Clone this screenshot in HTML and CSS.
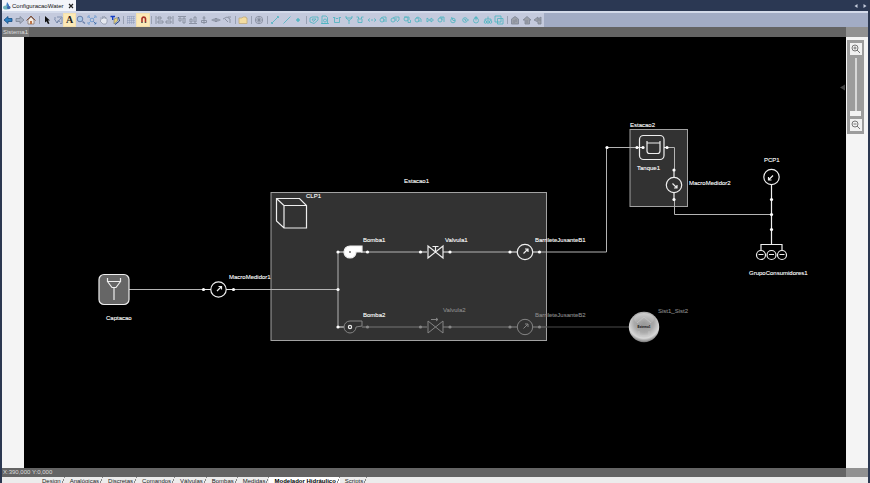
FILE: index.html
```
<!DOCTYPE html>
<html lang="pt-BR">
<head>
<meta charset="utf-8">
<title>ConfiguracaoWater</title>
<link rel="stylesheet" href="styles.css">
</head>
<body>
<div class="window">
  <header class="titlebar">
    <div class="doc-tab">
      <svg class="doc-icon" viewBox="0 0 8 8" aria-hidden="true"><path d="M4 0L6 3V5H3Z" fill="#3b78c4"/><ellipse cx="3" cy="5.5" rx="3" ry="2" fill="#6fb5bd"/><circle cx="5.7" cy="5.5" r="1.8" fill="#3c68ad"/></svg>
      <span>ConfiguracaoWater</span>
      <button class="doc-close" aria-label="Fechar"><svg viewBox="0 0 6 6"><path d="M1 1L5 5M5 1L1 5" stroke="#222" stroke-width="1.2"/></svg></button>
    </div>
    <div class="doc-nav">
      <button aria-label="Anterior"><svg viewBox="0 0 6 6"><path d="M4.500 1V5L1.500 3Z" fill="#c5ccdc"/></svg></button>
      <button aria-label="Próximo"><svg viewBox="0 0 6 6"><path d="M1.500 1V5L4.500 3Z" fill="#c5ccdc"/></svg></button>
    </div>
  </header>

  <div class="toolbar-row">
  <div class="toolbar" role="toolbar" aria-label="Ferramentas">
    <div class="group three">
      <button aria-label="Voltar"><svg viewBox="0 0 12 12"><path d="M2 6L6 2.500V4.500H10V7.500H6V9.500Z" fill="#2d7fc0" stroke="#174d83" stroke-width=".8"/></svg></button>
      <button aria-label="Avançar"><svg viewBox="0 0 12 12"><path d="M10 6L6 2.500V4.500H2V7.500H6V9.500Z" fill="#a9b2c5" stroke="#7c8596" stroke-width=".8"/></svg></button>
      <button aria-label="Início"><svg viewBox="0 0 12 12"><path d="M3 6V10H9V6L6 3Z" fill="#f4ede4" stroke="#8a7469" stroke-width=".8"/><path d="M1.500 6.500L6 2L10.500 6.500" fill="none" stroke="#80513e"/><path d="M5 7H7V10H5Z" fill="#bf7448"/></svg></button>
    </div><i class="sep"></i>
    <div class="group seven">
      <button aria-label="Selecionar"><svg viewBox="0 0 12 12"><path d="M4 2L9 6.500H7L8.500 9.500L7 10L5.500 7.300L4 8.500Z" fill="#111"/></svg></button>
      <button aria-label="Editar pontos"><svg viewBox="0 0 12 12" fill="none" stroke="#6f81a3" stroke-width=".8"><path d="M2 4H4M5 3H10V9.500H8"/><path d="M2.500 5L5 9L6 6.500L8.500 8M5 9L9 4"/></svg></button>
      <button class="on letter" aria-label="Texto">A</button>
      <button aria-label="Zoom"><svg viewBox="0 0 12 12" fill="#a9c7e6" stroke="#6a80aa"><circle cx="5" cy="5" r="2.800"/><path d="M7.500 7.500L10 9.500" stroke-width="1.400"/></svg></button>
      <button aria-label="Ajustar"><svg viewBox="0 0 12 12" fill="none" stroke="#6f9bd0" stroke-width=".9"><path d="M2 4V2H4M8 2H10V4M2 8V10H4M8 10H10V8M3 3L4.500 4.500M9 3L7.500 4.500M3 9L4.500 7.500"/><circle cx="6" cy="6" r="1.800"/><path d="M7.500 7.500L10 10" stroke="#4468a0"/></svg></button>
      <button aria-label="Mover"><svg viewBox="0 0 12 12"><path d="M3 6V3.500L4.500 5V2.500L6 4.500V2L7.500 4.500V3L9 5.500V8L8 10H5L2 7Z" fill="#e6e9f0" stroke="#8b94a6" stroke-width=".7"/></svg></button>
      <button aria-label="Formatar"><svg viewBox="0 0 12 12"><path d="M1.500 2.500H6M3.700 2.500V6" stroke="#153fc4" stroke-width="1.4"/><path d="M5 5L8.500 3.500L8.500 7L5 10Z" fill="#e4d27a" stroke="#777" stroke-width=".6"/><path d="M9.500 3L10.500 7L6 10.500" fill="none" stroke="#27488b"/></svg></button>
    </div><i class="sep"></i>
    <div class="group two">
      <button aria-label="Grade"><svg viewBox="0 0 12 12"><path d="M2.500 2V10M4.500 2V10M6.500 2V10M8.500 2V10M2 2.500H10M2 4.500H10M2 6.500H10M2 8.500H10" stroke="#8d9ab8" stroke-width=".5"/></svg></button>
      <button class="on" aria-label="Magnetismo"><svg viewBox="0 0 12 12" fill="none"><path d="M5 8V4.500A1.800 1.800 0 0 1 8.500 4.500V8" stroke="#a93228" stroke-width="1.600"/><path d="M4.200 8.500H5.800M7.700 8.500H9.300" stroke="#555"/></svg></button>
    </div><i class="sep"></i>
    <div class="group seven gray">
      <button aria-label="Alinhar à esquerda"><svg viewBox="0 0 12 12"><path d="M3 2V10M5 3H8V5H5ZM5 7H10V9H5Z"/></svg></button>
      <button aria-label="Alinhar à direita"><svg viewBox="0 0 12 12"><path d="M9 2V10M4 3H7V5H4ZM2 7H7V9H2Z"/></svg></button>
      <button aria-label="Alinhar ao topo"><svg viewBox="0 0 12 12"><path d="M2 2.500H10M3 4H5V7H3ZM7 4H9V9H7Z"/></svg></button>
      <button aria-label="Alinhar à base"><svg viewBox="0 0 12 12"><path d="M2 9.500H10M3 5H5V8H3ZM7 3H9V8H7Z"/></svg></button>
      <button aria-label="Centralizar vertical"><svg viewBox="0 0 12 12"><path d="M6 2V10M4.500 4H7.500M3.500 6.500H8.500V8.500H3.500Z"/></svg></button>
      <button aria-label="Centralizar horizontal"><svg viewBox="0 0 12 12"><path d="M1.500 6H10.500M4 4.500L2.500 6L4 7.500M8 4.500L9.500 6L8 7.500M5 4.500H7V7.500H5Z"/></svg></button>
      <button aria-label="Girar"><svg viewBox="0 0 12 12"><path d="M2 5L6 3L9 5V9M4 5L7 8M7 3H10"/></svg></button>
    </div><i class="sep"></i>
    <div class="group one">
      <button aria-label="Abrir"><svg viewBox="0 0 12 12"><path d="M2 4H5L6 3H9V4H10V9.500H2Z" fill="#f3dca0" stroke="#c2ab7c" stroke-width=".8"/></svg></button>
    </div><i class="sep"></i>
    <div class="group one gray">
      <button aria-label="Global"><svg viewBox="0 0 12 12"><circle cx="6" cy="6" r="3.700"/><path d="M6 3V9M4.500 4L7.500 8M7.500 4L4.500 8M3 6H9"/></svg></button>
    </div><i class="sep"></i>
    <div class="group three teal">
      <button aria-label="Conexão"><svg viewBox="0 0 12 12"><path d="M3 9L9 3M2.500 8V9.500H4M8 2.500H9.500V4"/></svg></button>
      <button aria-label="Linha"><svg viewBox="0 0 12 12"><path d="M2.500 9.500L9.500 2.500"/></svg></button>
      <button aria-label="Nó"><svg viewBox="0 0 12 12"><path d="M6 4V8M4 6H8M5 5H7V7H5Z"/></svg></button>
    </div><i class="sep"></i>
    <div class="group wide teal">
      <button aria-label="Etiqueta"><svg viewBox="0 0 12 12"><path d="M2 4L4 3H10V6L6 9.500L2 8ZM4 5H8L5.500 7.500Z"/></svg></button>
      <button aria-label="Estação"><svg viewBox="0 0 12 12"><path d="M3 2H7L8.500 3.500V9.500H3ZM2 9.500H10"/><circle cx="6" cy="6.500" r="1.500"/></svg></button>
      <button aria-label="Tanque"><svg viewBox="0 0 12 12"><path d="M2 3.500H4L5 4.500H7L8 3.500H10M3.500 4V8.500H8.500V4"/></svg></button>
      <button aria-label="Captação"><svg viewBox="0 0 12 12"><path d="M3 2V4H9V2M3 4L6 6.500L9 4M6 6V10"/></svg></button>
      <button aria-label="Reservatório"><svg viewBox="0 0 12 12"><path d="M2.500 3H4.500V5H7.500V3H9.500M4 5V8.500H8V5"/></svg></button>
      <button aria-label="Trecho"><svg viewBox="0 0 12 12"><path d="M4 4.500L2 6L4 7.500M8 4.500L10 6L8 7.500M5 6H7"/></svg></button>
      <button aria-label="Bomba"><svg viewBox="0 0 12 12"><circle cx="5" cy="6" r="2"/><path d="M4 4L6 3H9V8M7 5V8"/></svg></button>
      <button aria-label="Bomba dupla"><svg viewBox="0 0 12 12"><circle cx="4" cy="6" r="2"/><path d="M4 4L6 3H10V6L8 8M7 4V7"/></svg></button>
      <button aria-label="Booster"><svg viewBox="0 0 12 12"><circle cx="5" cy="5" r="2"/><path d="M3 3H8V6M7 6V8.500H9.500V6"/></svg></button>
      <button aria-label="Válvula"><svg viewBox="0 0 12 12"><circle cx="5" cy="6" r="2"/><path d="M4 4L6 3L9 5V8M7 6V8"/></svg></button>
      <button aria-label="Retenção"><svg viewBox="0 0 12 12"><path d="M3 4L5.500 6L3 8ZM5 6H7M7 4L9.500 6L7 8Z"/></svg></button>
      <button aria-label="Controle"><svg viewBox="0 0 12 12"><circle cx="5" cy="6" r="2"/><path d="M5 4V3H9V8M7 3V6"/></svg></button>
      <button aria-label="Medidor de pressão"><svg viewBox="0 0 12 12"><circle cx="6" cy="6.500" r="2.300"/><path d="M4.500 3L6 6.500H8"/></svg></button>
      <button aria-label="Medidor de vazão"><svg viewBox="0 0 12 12"><circle cx="6" cy="6" r="2.300"/><path d="M5 5L7 6L6 7M8.500 6H10"/></svg></button>
      <button aria-label="Ponto crítico"><svg viewBox="0 0 12 12"><circle cx="6" cy="6.500" r="2.500"/><path d="M6 2V6.500M4.500 3.500H7.500"/></svg></button>
      <button aria-label="Consumidores"><svg viewBox="0 0 12 12"><path d="M6 2.500V5M3 7V5H9V7"/><circle cx="3.500" cy="8" r="1.300"/><circle cx="6" cy="8" r="1.300"/><circle cx="8.500" cy="8" r="1.300"/></svg></button>
      <button aria-label="Copiar"><svg viewBox="0 0 12 12"><path d="M2 2H8V8H2ZM4.500 4.500H10V10H4.500Z"/></svg></button>
    </div><i class="sep"></i>
    <div class="group three gray solid">
      <button aria-label="Validar"><svg viewBox="0 0 12 12"><path d="M2.500 10V5L6 2.500L9.500 5V10ZM5 6V9M7 5V8"/></svg></button>
      <button aria-label="Subir"><svg viewBox="0 0 12 12"><path d="M2 6L6 2.500L10 6H8.500V10H4V6ZM6 6V9"/></svg></button>
      <button aria-label="Descarregar"><svg viewBox="0 0 12 12"><path d="M2 6L6 3V5L9 3V10H6V8ZM5 6H9"/></svg></button>
    </div>
  </div>
  </div>

  <div class="strip"><span class="sys-name">Sistema1</span><span class="strip-end"></span></div>

  <main class="workspace">
    <div class="margin"></div>
    <div class="canvas">
      <svg class="diagram" viewBox="24 37 822 431" role="img" aria-label="Modelador hidráulico">
        <defs>
          <radialGradient id="ball" cx=".5" cy=".35" r=".65"><stop offset="0" stop-color="#929292"/><stop offset=".5" stop-color="#aaa"/><stop offset=".8" stop-color="#d8d8d8"/><stop offset="1" stop-color="#777"/></radialGradient>
          <linearGradient id="shine" x2="0" y2="1"><stop offset="0" stop-color="#fff"/><stop offset="1" stop-color="#fff" stop-opacity="0"/></linearGradient>
          <g id="valve"><path d="M-7.500-6V6L7.500-6V6Z"/></g>
          <g id="meter"><circle r="7.700"/><path d="M-1.500 1.500L3-3M0-3H3V0"/></g>
          <circle id="dot" r="1.600"/>
        </defs>
        <rect class="station" x="271" y="192.500" width="275.500" height="148"/>
        <rect class="station" x="630" y="129.500" width="57.500" height="77"/>

        <g class="pipe">
          <path d="M129 289.500H203M233 289.500H338M338 252V327M368 252H420M450 252H510M540 252H606.500V147.500H637M667 147.500H674.500V170M674.500 200V214.500H771.500"/>
          <path class="off" d="M368 327H420M450 327H510M540 327H546"/>
          <path class="far" d="M546 327H630"/>
        </g>

        <g class="shape">
          <path d="M203 289.500H211M226 289.500H233M338 252H344M361 252H368M420 252H427M443 252H450M510 252H517M533 252H540M338 327H344M637 147.500H643M664 147.500H667M674 170V177M674 193V200M771.500 185V244.500M761 250V244.500H782V250"/>
          <rect x="99" y="274.500" width="30" height="30" rx="5" fill="#666"/>
          <path d="M107.500 278V281.500H120.500V278M107.500 281.500L112 287.500H116L120.500 281.500M114 287.500V300"/>
          <path d="M276.500 198.500H299.500L306.500 205.500V228H284L276.500 221ZM276.500 198.500L284 205.500V228M284 205.500H306.500"/>
          <path d="M362 246H350A6 6 0 1 0 356 252H362Z" fill="#fff"/><circle cx="350" cy="252" r=".8" fill="#000" stroke="none"/>
          <g class="faded"><path d="M368 327H362M362 321H350A6 6 0 1 0 356 327L362 326ZM420 327H427M443 327H450M510 327H517M533 327H540M431 319.500H438M436 318L438 319.500L436 321"/><use href="#valve" x="435.500" y="327"/><use href="#meter" x="525" y="327"/></g>
          <circle cx="350" cy="327" r="1.600"/>
          <use href="#valve" x="435.500" y="252"/><path d="M432.500 246.500H438.500M435.500 246.500V252"/>
          <use href="#meter" x="218.500" y="289.500"/>
          <use href="#meter" x="525" y="252"/>
          <g transform="translate(674 185) rotate(90)"><use href="#meter"/></g>
          <g transform="translate(771.500 177) rotate(180)"><use href="#meter"/></g>
          <rect x="639.500" y="135.500" width="24.500" height="24" rx="4"/>
          <path d="M647 141V151Q647 153.500 649.500 153.500H657.500Q660 153.500 660 151V141M647 143H660"/>
          <circle cx="761" cy="255" r="4.500"/><circle cx="771.500" cy="255" r="4.500"/><circle cx="782" cy="255" r="4.500"/>
          <path d="M758.500 254.500H763.500M769 254.500H774M779.500 254.500H784.500"/>
        </g>

        <g class="dots">
          <use href="#dot" x="203.500" y="289.500"/><use href="#dot" x="233.500" y="289.500"/><use href="#dot" x="338" y="289.500"/>
          <use href="#dot" x="338" y="252"/><use href="#dot" x="367.500" y="252"/><use href="#dot" x="420.500" y="252"/><use href="#dot" x="450" y="252"/><use href="#dot" x="510" y="252"/><use href="#dot" x="539.500" y="252"/>
          <use href="#dot" x="338" y="327"/>
          <use href="#dot" x="607" y="147.500"/><use href="#dot" x="637" y="147.500"/><use href="#dot" x="643" y="147.500"/><use href="#dot" x="667" y="147.500"/>
          <use href="#dot" x="674" y="170"/><use href="#dot" x="674" y="199.500"/>
          <use href="#dot" x="771.500" y="199.500"/><use href="#dot" x="771.500" y="214.500"/><use href="#dot" x="771.500" y="229.500"/>
        </g>
        <g class="dots-off">
          <use href="#dot" x="367.500" y="327"/><use href="#dot" x="420.500" y="327"/><use href="#dot" x="450" y="327"/><use href="#dot" x="510" y="327"/><use href="#dot" x="539.500" y="327"/>
        </g>

        <circle cx="644" cy="327" r="15.200" fill="url(#ball)"/>
        <ellipse cx="644" cy="319" rx="10" ry="6" fill="url(#shine)" opacity=".45"/>
        <path d="M637 323L644 317L651 323M639 331V336H649V331" fill="none" stroke="#ccc" opacity=".6"/>
        <path d="M845 84.500L840 87.500L845 90.500Z" fill="#444"/>

        <g class="label">
          <text x="404" y="183">Estacao1</text><text x="306" y="198">CLP1</text>
          <text x="363" y="242">Bomba1</text><text x="445" y="242">Valvula1</text><text x="535" y="242">BarrileteJusanteB1</text>
          <text x="363" y="317">Bomba2</text>
          <text x="229" y="279">MacroMedidor1</text><text x="106" y="320">Captacao</text>
          <text x="630" y="127">Estacao2</text><text x="637" y="170">Tanque1</text><text x="689" y="185">MacroMedidor2</text>
          <text x="764" y="162">PCP1</text><text x="749" y="275">GrupoConsumidores1</text>
        </g>
        <g class="label off-label">
          <text x="443" y="312">Valvula2</text><text x="535" y="317">BarrileteJusanteB2</text><text x="658" y="313">Sist1_Sist2</text>
        </g>
        <text class="ball-label" x="644" y="328">Externo1</text>
      </svg>
    </div>
    <aside class="side">
      <div class="zoom">
        <button class="zoom-btn" aria-label="Aumentar zoom"><svg viewBox="0 0 12 12"><circle cx="5" cy="5" r="3"/><path d="M7 7L10 10M3.500 5H6.500M5 3.500V6.500"/></svg></button>
        <input class="zoom-range" type="range" min="0" max="100" value="0" aria-label="Nível de zoom">
        <button class="zoom-btn" aria-label="Reduzir zoom"><svg viewBox="0 0 12 12"><circle cx="5" cy="5" r="3"/><path d="M7 7L10 10M3.500 5H6.500"/></svg></button>
      </div>
    </aside>
  </main>

  <div class="strip status"><span>X:390,000 Y:0,000</span><span class="strip-end"></span></div>

  <nav class="sheets">
    <a href="#">Design</a><a href="#">Analógicas</a><a href="#">Discretas</a><a href="#">Comandos</a><a href="#">Válvulas</a><a href="#">Bombas</a><a href="#">Medidas</a><a class="current" href="#" aria-current="page">Modelador Hidráulico</a><a href="#">Scripts</a>
  </nav>
</div>
</body>
</html>
```
FILE: styles.css
```
* { box-sizing: border-box; }

body {
  margin: 0;
  background: #2b3750;
  font: 6px/8px "Liberation Sans", sans-serif;
  color: #111;
}

button {
  display: flex;
  align-items: center;
  justify-content: center;
  padding: 0;
  border: 0;
  background: none;
}

.window {
  display: flex;
  flex-direction: column;
  height: 100vh;
  padding: 0 2px;
  overflow: hidden;
}

.titlebar {
  display: flex;
  justify-content: space-between;
  height: 11px;
  flex: none;
  background: #2b3853;
}

.doc-tab {
  display: flex;
  align-items: center;
  gap: 1px;
  padding: 0 1px;
  background: #f3f5fa;
}

.doc-icon { width: 8px; height: 8px; }
.doc-close { width: 8px; margin-left: 3px; }
.doc-close svg { width: 6px; height: 6px; }
.doc-nav { display: flex; gap: 3px; }
.doc-nav svg { width: 6px; height: 6px; }

.toolbar-row {
  flex: none;
  height: 16px;
  border-top: 2px solid #d3daea;
  background: #a2acc5;
}

.toolbar {
  display: flex;
  align-items: center;
  width: max-content;
  height: 14px;
  background: #c4cadd;
}

.group { display: flex; }
.group button { flex: 1; min-width: 0; height: 12px; }
.group svg { flex: none; width: 12px; height: 12px; }
.one { width: 12px; }
.two { width: 24px; }
.three { width: 35px; }
.seven { width: 80px; }
.wide { width: 197px; }
.group .on { background: #fce9b6; box-shadow: 0 0 0 1px #f3e0ae; }
.letter { font: bold 10px/12px "Liberation Serif", serif; color: #222; }
.gray svg { fill: none; stroke: #7d8596; stroke-width: 0.8; }
.teal svg { fill: none; stroke: #4ab4c0; stroke-width: 0.8; }
.solid svg { fill: #9da1aa; }

.sep {
  flex: none;
  width: 1px;
  height: 8px;
  margin: 0 1px 0 2px;
  background: #99a1b3;
}

.strip {
  display: flex;
  justify-content: space-between;
  flex: none;
  height: 10px;
  line-height: 10px;
  background: #646464;
  color: #ddd;
}

.sys-name { padding: 0 1px; background: #777; }
.strip-end { width: 22px; background: #919191; }
.status { height: 9px; line-height: 9px; }
.status span:first-child { padding-left: 1px; }

.workspace {
  display: flex;
  flex: 1;
  min-height: 0;
}

.margin { width: 22px; background: #f4f4f4; }
.canvas { flex: 1; min-width: 0; background: #000; }
.diagram { display: block; width: 100%; height: 100%; }

.pipe { fill: none; stroke: #b4b4b4; stroke-width: 1; }
.pipe .off { stroke: #747474; }
.pipe .far { stroke: #4a4a4a; }
.shape { fill: none; stroke: #eee; stroke-width: 1.2; }
.faded { stroke: #848484; stroke-width: 1; }
.dots { fill: #fff; }
.dots-off { fill: #888; }
.station { fill: #323232; stroke: #a2a2a2; }
.label { fill: #fff; stroke: #fff; stroke-width: 0.1; font-size: 6px; }
.off-label { fill: #888; stroke: #888; }
.ball-label { fill: #000; font-size: 3px; font-weight: bold; text-anchor: middle; }

.side {
  width: 22px;
  padding: 3px 4px 0 1px;
  background: #f4f4f4;
}

.zoom {
  display: flex;
  flex-direction: column;
  align-items: center;
  gap: 3px;
  padding: 3px 0;
  background: #9c9c9c;
}

.zoom-btn { width: 12px; height: 12px; background: #f1f1f1; }
.zoom-btn svg { width: 12px; height: 12px; fill: none; stroke: #777; stroke-width: 1; }

.zoom-range {
  appearance: none;
  writing-mode: vertical-lr;
  direction: rtl;
  width: 12px;
  height: 58px;
  margin: 0;
  background: linear-gradient(#d8d8d8, #d8d8d8) center / 2px 100% no-repeat;
}

.zoom-range::-webkit-slider-thumb {
  appearance: none;
  width: 11px;
  height: 5px;
  background: #f2f2f2;
}

.sheets {
  display: flex;
  flex: none;
  height: 6px;
  padding-left: 35px;
  overflow: hidden;
  background: #ececec;
}

.sheets a {
  flex: none;
  height: 8px;
  padding: 0 4px 0 5px;
  color: #222;
  text-decoration: none;
  background: linear-gradient(115deg, transparent 46%, #888 46% 54%, transparent 54%) right top / 4px 8px no-repeat;
}

.sheets .current { background-color: #fff; font-weight: bold; color: #000; }
```
